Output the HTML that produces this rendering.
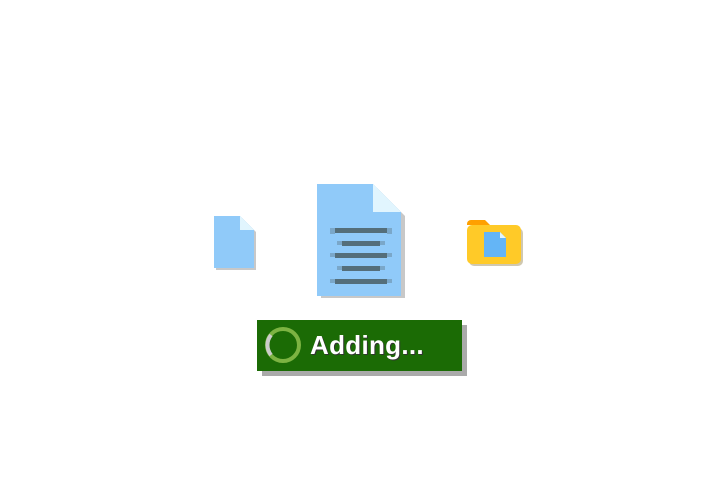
<!DOCTYPE html>
<html><head><style>
body{margin:0;width:720px;height:480px;background:#fff;position:relative;overflow:hidden;font-family:"Liberation Sans",sans-serif}
.a{position:absolute}
</style></head><body>
<svg class="a" style="left:0;top:0" width="720" height="480">
<path d="M216 218h26l14 14v38h-40z" fill="#c8c8c8"/>
<path d="M214 216h26l14 14v38h-40z" fill="#90caf9"/>
<path d="M240 216l14 14h-14z" fill="#e1f5fe"/>
<path d="M321 188h56l28 28v82h-84z" fill="#c8c8c8"/>
<path d="M317 184h56l28 28v84h-84z" fill="#90caf9"/>
<path d="M373 184l28 28h-28z" fill="#e1f5fe"/>
<g fill="#546e7a">
<rect x="335" y="228" width="52" height="5"/><rect x="342" y="241" width="38" height="5"/>
<rect x="335" y="253" width="52" height="5"/><rect x="342" y="266" width="38" height="5"/>
<rect x="335" y="279" width="52" height="5"/>
</g>
<g stroke="#546e7a" stroke-width="0.8">
<path d="M330 229h5M330 231h5M330 233h5M387 229h5M387 231h5M387 233h5"/>
<path d="M337 242h5M337 244h5M380 242h5M380 244h5"/>
<path d="M330 254h5M330 256h5M387 254h5M387 256h5"/>
<path d="M337 267h5M337 269h5M380 267h5M380 269h5"/>
<path d="M330 280h5M330 282h5M387 280h5M387 282h5"/>
</g>
<rect x="469" y="228" width="54" height="38" rx="5" fill="#d0c8b0"/>
<path d="M467 224a4 4 0 0 1 4-4h14l5 5h-23z" fill="#ffa000"/>
<rect x="467" y="225" width="54" height="39" rx="5" fill="#ffca28"/>
<path d="M484 232h16l6 6v19h-22z" fill="#64b5f6"/>
<path d="M500 232l6 6h-6z" fill="#e1f5fe"/>
<rect x="262" y="325" width="205" height="51" fill="#aaa"/>
<rect x="257" y="320" width="205" height="51" fill="#1b6b05"/>
<circle cx="283" cy="345" r="16" fill="none" stroke="#7cb342" stroke-width="4"/>
<path d="M271 335a16 16 0 0 0 0 20" fill="none" stroke="#ccc" stroke-width="4"/>
<text x="310" y="354" font-family="Liberation Sans" font-weight="bold" font-size="26" letter-spacing="0.3" fill="#333" transform="translate(1,1)">Adding...</text>
<text x="310" y="354" font-family="Liberation Sans" font-weight="bold" font-size="26" letter-spacing="0.3" fill="#fff">Adding...</text>
</svg>
</body></html>
